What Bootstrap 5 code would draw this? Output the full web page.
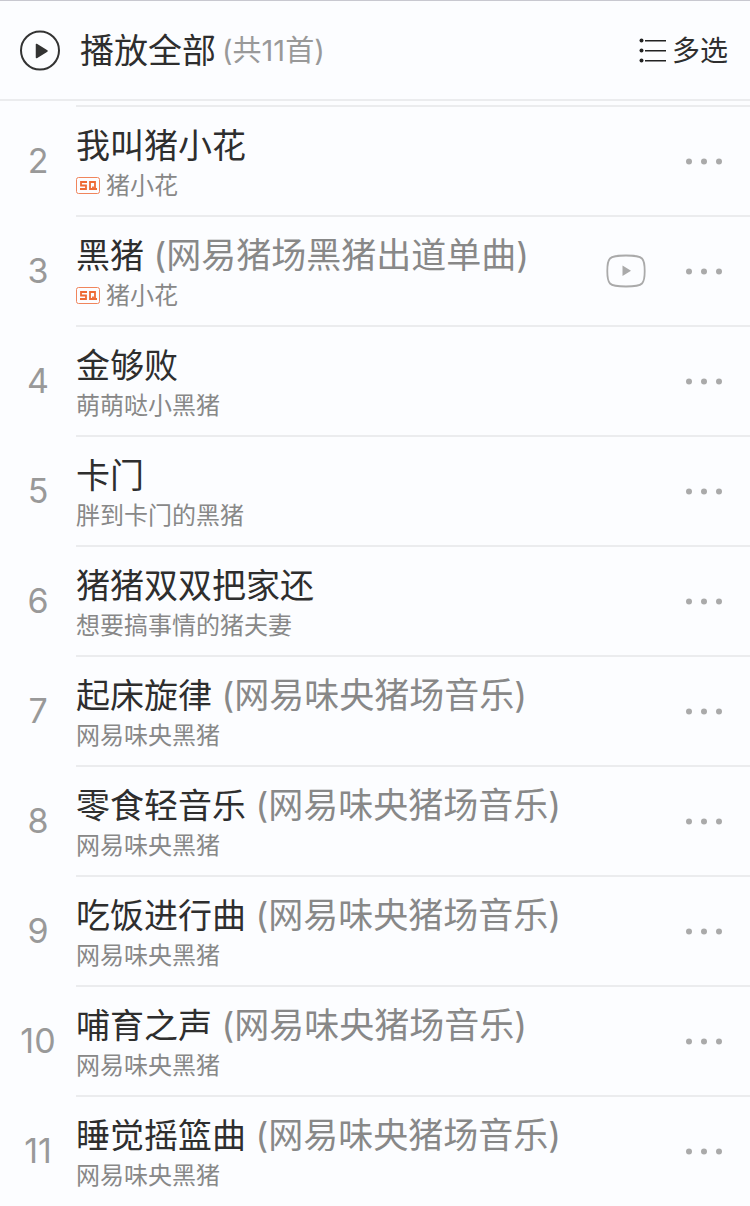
<!DOCTYPE html>
<html lang="zh-CN">
<head>
<meta charset="utf-8">
<meta name="viewport" content="width=device-width, initial-scale=1">
<title>播放全部</title>
<link href="https://cdn.jsdelivr.net/npm/bootstrap@5.3.0/dist/css/bootstrap.min.css" rel="stylesheet">
<style>
  body { background: #fcfdff; color: #333; font-family: Inter, "Noto Sans CJK SC", sans-serif; }
  .topbar { height: 101px; padding: 0 22px 0 20px; border-top: 1px solid #c8c8d0; border-bottom: 2px solid #ebecee; }
  .topbar .btn, .song-title { color: #2e2e2e; }
  .play-label, .song-title { font-size: 34px; line-height: 44px; }
  .play-label, .play-count, .select-label { padding-top: 2px; }
  .play-count { font-size: 29px; line-height: 44px; color: #999; margin-left: 6px; }
  .select-label { font-size: 28px; line-height: 44px; }
  .songs { margin-top: 4px; }
  .song { height: 110px; }
  .song-no { width: 76px; font-size: 34px; color: #999; }
  .song-body { border-top: 2px solid #ebecee; padding-right: 22px; }
  .song-text { padding-top: 6px; }
  .song-alias { font-size: 35px; line-height: 1; color: #888; }
  .song-artist { font-size: 24px; line-height: 36px; color: #888; }
  .quality { margin-right: 6px; }
  .mv-btn { margin-right: 34px; }
</style>
</head>
<body>
<header class="topbar d-flex align-items-center justify-content-between">
  <button type="button" class="btn p-0 border-0 d-flex align-items-center">
    <svg width="40" height="42" viewBox="0 0 40 42" aria-hidden="true"><circle cx="20" cy="21.500" r="19" fill="none" stroke="#333" stroke-width="2"/><path d="M16.500 15.500v13l10.500-6.500z" fill="#333" stroke="#333" stroke-width="1.500" stroke-linejoin="round"/></svg>
    <span class="play-label ms-3 ps-1">播放全部</span><span class="play-count">(共11首)</span>
  </button>
  <button type="button" class="btn p-0 border-0 d-flex align-items-center">
    <svg class="me-1" width="30" height="26" viewBox="0 0 30 26" aria-hidden="true"><g fill="#222"><circle cx="3.500" cy="3.500" r="2"/><circle cx="3.500" cy="13.500" r="2"/><circle cx="3.500" cy="23.500" r="2"/><path d="M7 3h21v1.500H7zM7 13h21v1.500H7zM7 23h21v1.500H7z"/></g></svg>
    <span class="select-label">多选</span>
  </button>
</header>
<main>
  <ol class="songs list-unstyled mb-0" id="songs"></ol>
</main>
<script src="https://cdn.jsdelivr.net/npm/bootstrap@5.3.0/dist/js/bootstrap.bundle.min.js"></script>
<script>
  const farm = '网易味央猪场音乐', pig = '网易味央黑猪';
  const songs = [
    { title: '我叫猪小花', artist: '猪小花', sq: true },
    { title: '黑猪', alias: '网易猪场黑猪出道单曲', artist: '猪小花', sq: true, mv: true },
    { title: '金够败', artist: '萌萌哒小黑猪' },
    { title: '卡门', artist: '胖到卡门的黑猪' },
    { title: '猪猪双双把家还', artist: '想要搞事情的猪夫妻' },
    { title: '起床旋律', alias: farm, artist: pig },
    { title: '零食轻音乐', alias: farm, artist: pig },
    { title: '吃饭进行曲', alias: farm, artist: pig },
    { title: '哺育之声', alias: farm, artist: pig },
    { title: '睡觉摇篮曲', alias: farm, artist: pig }
  ];
  const sqIcon = '<svg class="quality" width="24" height="18" viewBox="0 0 24 18" role="img" aria-label="SQ"><rect x="0.5" y="0.5" width="23" height="16" rx="2" fill="none" stroke="#f0855c"/><path d="M11 5H5v3.500h5V12H4M14 5h5v7h-5zM17 9.500V12h4" fill="none" stroke="#ee6a35" stroke-width="1.800"/></svg>';
  const mvButton = '<button type="button" class="mv-btn btn p-0 border-0 d-flex" aria-label="播放MV"><svg width="40" height="34" viewBox="0 0 40 34"><path d="M20 1.500C29 1.500 33.500 2 36 4.500C38.500 7 38.700 11 38.700 17S38.500 27 36 29.500C33.500 32 29 32.500 20 32.500S6.500 32 4 29.500C1.500 27 1.300 23 1.300 17S1.500 7 4 4.500C6.500 2 11 1.500 20 1.500z" fill="none" stroke="#aaa" stroke-width="1.800"/><path d="M16.500 11.500v10.500l8.500-5.200z" fill="#aaa"/></svg></button>';
  const moreButton = '<button type="button" class="btn p-0 border-0 d-flex" aria-label="更多"><svg width="48" height="40" viewBox="0 0 48 40" fill="#aaa"><circle cx="9" cy="20.500" r="3"/><circle cx="24" cy="20.500" r="3"/><circle cx="39" cy="20.500" r="3"/></svg></button>';
  document.getElementById('songs').innerHTML = songs.map((s, i) => `
    <li class="song d-flex">
      <span class="song-no d-flex flex-shrink-0 align-items-center justify-content-center">${i + 2}</span>
      <div class="song-body d-flex flex-grow-1 align-items-center">
        <div class="song-text flex-grow-1">
          <div class="song-title">${s.title}${s.alias ? ` <span class="song-alias">(${s.alias})</span>` : ''}</div>
          <div class="song-artist d-flex align-items-center">${s.sq ? sqIcon : ''}${s.artist}</div>
        </div>
        ${s.mv ? mvButton : ''}${moreButton}
      </div>
    </li>`).join('');
</script>
</body>
</html>
